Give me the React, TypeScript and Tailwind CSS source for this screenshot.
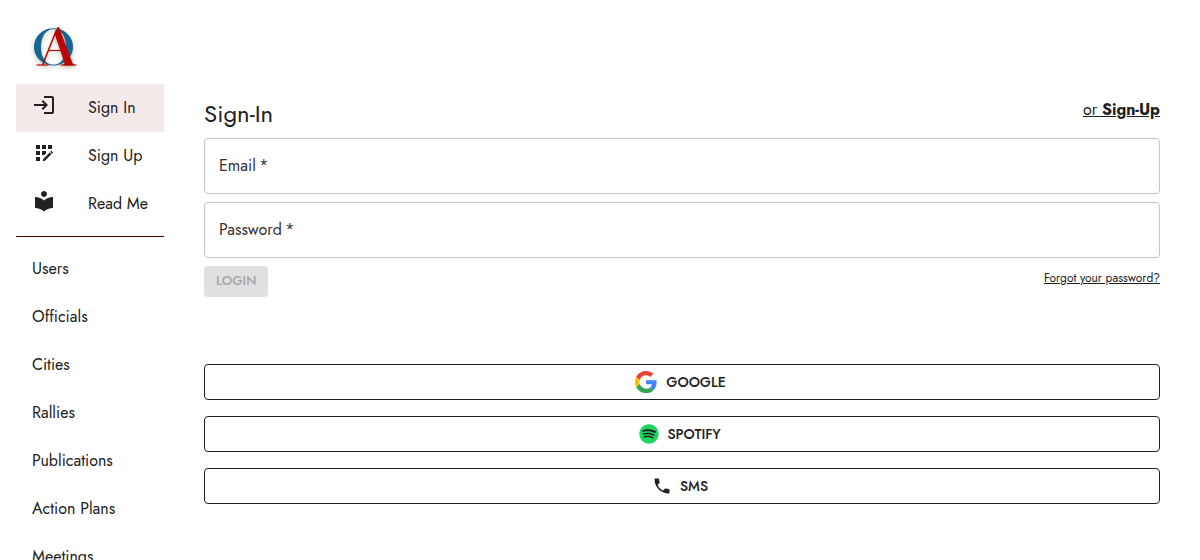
import type { ReactNode } from "react";
import { MdAppRegistration, MdLocalLibrary, MdLogin, MdPhone } from "react-icons/md";
import { FaSpotify } from "react-icons/fa";

const accountLinks = [
  { label: "Sign In", icon: <MdLogin size={24} />, active: true },
  { label: "Sign Up", icon: <MdAppRegistration size={24} />, active: false },
  { label: "Read Me", icon: <MdLocalLibrary size={24} />, active: false },
];

const sections = ["Users", "Officials", "Cities", "Rallies", "Publications", "Action Plans", "Meetings"];

function Logo() {
  return (
    <svg viewBox="0 0 48 48" className="h-12 w-12 drop-shadow-[0_2px_2px_rgba(90,100,50,0.4)]" role="img" aria-label="OA">
      <path
        fill="#176592"
        fillRule="evenodd"
        d="M21.5 4.200a19.500 18.700 0 1 0 .01 0zM21.500 5.200c7.500 0 12.500 7 12.500 17.700s-5 17.700-12.500 17.700S9 33.600 9 22.900 14 5.200 21.500 5.200z"
      />
      <g stroke="#b90504" fill="none">
        <line x1="24.500" y1="6" x2="10.500" y2="41" strokeWidth="1.500" />
        <line x1="16" y1="26.500" x2="32" y2="26.500" strokeWidth="1.200" />
        <line x1="4.500" y1="41" x2="16.500" y2="41" strokeWidth="1.200" />
        <line x1="28.500" y1="41" x2="44.500" y2="41" strokeWidth="1.200" />
      </g>
      <polygon fill="#b90504" points="25.700,3 27,3 40.500,39 42.500,41.200 31,41.200 32.500,39 22.500,9.500" />
    </svg>
  );
}

function GoogleIcon() {
  return (
    <svg viewBox="-2 -2 52 52" className="size-6" aria-hidden="true">
      <path fill="#EA4335" d="M24 9.500c3.540 0 6.710 1.220 9.210 3.600l6.850-6.850C35.900 2.380 30.470 0 24 0 14.620 0 6.510 5.380 2.560 13.220l7.980 6.190C12.430 13.720 17.740 9.500 24 9.500z" />
      <path fill="#4285F4" d="M46.980 24.550c0-1.570-.15-3.090-.38-4.550H24v9.020h12.940c-.58 2.960-2.260 5.480-4.780 7.180l7.730 6c4.510-4.180 7.090-10.360 7.090-17.650z" />
      <path fill="#FBBC05" d="M10.530 28.590c-.48-1.450-.76-2.990-.76-4.590s.27-3.140.76-4.590l-7.980-6.190C.92 16.460 0 20.120 0 24c0 3.880.92 7.540 2.560 10.780l7.970-6.190z" />
      <path fill="#34A853" d="M24 48c6.480 0 11.930-2.130 15.890-5.810l-7.730-6c-2.150 1.450-4.920 2.300-8.160 2.300-6.260 0-11.570-4.220-13.470-9.910l-7.980 6.190C6.510 42.620 14.620 48 24 48z" />
    </svg>
  );
}

function SpotifyIcon() {
  return (
    <svg viewBox="0 0 20 20" className="size-5" aria-hidden="true">
      <circle cx="10" cy="10" r="9" fill="#212121" />
      <FaSpotify size={20} color="#1ed760" />
    </svg>
  );
}

function Field({ id, label, type }: { id: string; label: string; type: string }) {
  return (
    <div className="relative">
      <input
        id={id}
        type={type}
        required
        placeholder=" "
        className="peer block h-14 w-full rounded border border-[#c4c4c4] px-3.5 text-base outline-none focus:border-[#5c0000]"
      />
      <label
        htmlFor={id}
        className="pointer-events-none absolute top-4 left-[15px] bg-white text-base leading-6 text-[#333333] peer-focus:-top-3 peer-focus:text-xs peer-[:not(:placeholder-shown)]:-top-3 peer-[:not(:placeholder-shown)]:text-xs"
      >
        {label}
        {"\u2009*"}
      </label>
    </div>
  );
}

function ProviderButton({ icon, children }: { icon: ReactNode; children: ReactNode }) {
  return (
    <button
      type="button"
      className="flex h-9 w-full items-center justify-center gap-2 rounded border border-[#212121] pr-1 text-sm font-medium hover:bg-gray-50"
    >
      {icon}
      {children}
    </button>
  );
}

export default function App() {
  return (
    <div className="flex h-screen gap-10 overflow-hidden bg-white pr-10 pl-4 font-['Jost','Lato',sans-serif] text-[#212121]">
      <aside className="w-[148px] shrink-0 overflow-y-auto pt-6 [scrollbar-width:none]">
        <a href="#home" className="ml-4 block w-12">
          <Logo />
        </a>
        <nav className="pt-3">
          <ul className="border-b border-[#5c0000] pb-2">
            {accountLinks.map(({ label, icon, active }) => (
              <li key={label}>
                <a href="#account" className={active ? "flex h-12 items-center gap-8 bg-[#f5eaea] pl-4" : "flex h-12 items-center gap-8 pl-4"}>
                  <span className="pb-1.5">{icon}</span>
                  <span className="whitespace-nowrap">{label}</span>
                </a>
              </li>
            ))}
          </ul>
          <ul className="pt-2">
            {sections.map((label) => (
              <li key={label}>
                <a href="#section" className="flex h-12 items-center pl-4">
                  {label}
                </a>
              </li>
            ))}
          </ul>
        </nav>
      </aside>

      <main className="min-w-0 flex-1 overflow-y-auto pt-[98px] [scrollbar-width:none]">
        <div className="flex items-start justify-between">
          <h1 className="text-2xl leading-8">Sign-In</h1>
          <a href="#sign-up" className="text-base leading-6 underline">
            or <strong className="font-bold">Sign-Up</strong>
          </a>
        </div>
        <form className="mt-2 flex flex-col gap-2">
          <Field id="email" label="Email" type="email" />
          <Field id="password" label="Password" type="password" />
          <div className="flex items-start justify-between">
            <button type="submit" disabled className="h-[31px] rounded bg-[#e0e0e0] px-3 pb-0.5 text-[13px] font-medium text-[#a6a6a6]">
              LOGIN
            </button>
            <a href="#forgot" className="text-xs leading-6 underline">
              Forgot your password?
            </a>
          </div>
        </form>
        <div className="mt-[67px] flex flex-col gap-4">
          <ProviderButton icon={<GoogleIcon />}>GOOGLE</ProviderButton>
          <ProviderButton icon={<SpotifyIcon />}>SPOTIFY</ProviderButton>
          <ProviderButton icon={<MdPhone size={20} />}>SMS</ProviderButton>
        </div>
      </main>
    </div>
  );
}
